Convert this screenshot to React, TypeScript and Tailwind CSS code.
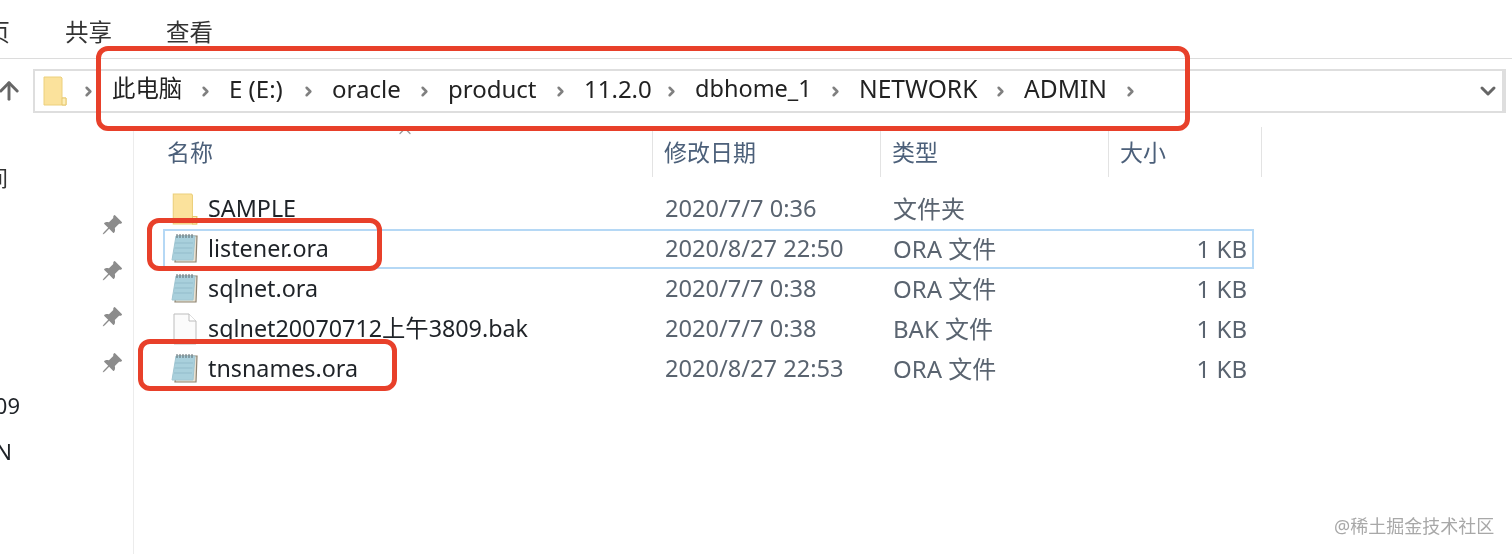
import { ArrowUp, ChevronDown, ChevronRight, ChevronUp } from "lucide-react";
import { BsPinAngleFill } from "react-icons/bs";

const crumbs = [
  { label: "此电脑", slot: "w-[117px]", text: "text-[23.4px]" },
  { label: "E (E:)", slot: "w-[103px]", text: "text-[24px]" },
  { label: "oracle", slot: "w-[116px]", text: "text-[24px]" },
  { label: "product", slot: "w-[136px]", text: "text-[24px]" },
  { label: "11.2.0", slot: "w-[111px]", text: "text-[24px]" },
  { label: "dbhome_1", slot: "w-[164px]", text: "text-[23.5px]" },
  { label: "NETWORK", slot: "w-[165px]", text: "text-[24.6px]" },
  { label: "ADMIN", slot: "w-[130px]", text: "text-[24.6px]" },
];

const files = [
  { name: "SAMPLE", date: "2020/7/7 0:36", type: "文件夹", size: "", icon: "folder" },
  { name: "listener.ora", date: "2020/8/27 22:50", type: "ORA 文件", size: "1 KB", icon: "note", selected: true },
  { name: "sqlnet.ora", date: "2020/7/7 0:38", type: "ORA 文件", size: "1 KB", icon: "note" },
  { name: "sqlnet20070712上午3809.bak", date: "2020/7/7 0:38", type: "BAK 文件", size: "1 KB", icon: "blank" },
  { name: "tnsnames.ora", date: "2020/8/27 22:53", type: "ORA 文件", size: "1 KB", icon: "note" },
];

function FolderIcon({ className }: { className: string }) {
  return (
    <svg viewBox="0 0 24 30" className={className}>
      <path d="M1 1h17l1 1v20h4v7H1z" fill="#fbe29c" stroke="#ecd07c" strokeWidth="1" />
      <path d="M19 22h4v7h-4z" fill="#fdeeb8" stroke="#e6c76e" strokeWidth="1" />
    </svg>
  );
}

function NoteIcon() {
  return (
    <svg viewBox="0 0 28 32" className="w-[28px] h-[32px] shrink-0">
      <path d="M7 3h19l-1 26H4z" fill="#e9e2d2" stroke="#8d8371" strokeWidth="1.2" />
      <path d="M5 3h19l-2 24H1z" fill="#a9d0dc" stroke="#a0c6d2" strokeWidth="1" />
      <path d="M4 10h18M3.5 15h18M3 20h18" stroke="#93bccb" strokeWidth="1" />
      <path d="M6 1v4M9 1v4M12 1v4M15 1v4M18 1v4M21 1v4" stroke="#5d6a70" strokeWidth="1" />
    </svg>
  );
}

function BlankIcon() {
  return (
    <svg viewBox="0 0 24 32" className="w-[24px] h-[32px] ml-[2px] mr-[2px] shrink-0">
      <path d="M1 1h15l7 7v23H1z" fill="#fbfbfb" stroke="#bdbdbd" strokeWidth="1" />
      <path d="M16 1v7h7" fill="#fff" stroke="#bdbdbd" strokeWidth="1" />
    </svg>
  );
}

export default function App() {
  return (
    <div
      className="relative w-[1512px] h-[554px] overflow-hidden bg-white text-[#1f2328]"
      style={{ fontFamily: '"Noto Sans", "Noto Sans CJK SC", sans-serif' }}
    >
      <div className="flex flex-col h-full blur-[0.6px]">
        {/* menu tabs */}
        <div className="h-[59px] shrink-0 border-b border-[#dcdcdc] flex items-center pt-[8px] overflow-hidden text-[23.5px] text-[#333]">
          <span className="ml-[-37px] w-[102px] shrink-0 whitespace-nowrap">主页</span>
          <span className="w-[101px] shrink-0">共享</span>
          <span>查看</span>
        </div>

        {/* address bar */}
        <div className="h-[68px] shrink-0 flex items-start pt-[10px]">
          <div className="w-[33px] h-[44px] flex items-center justify-end overflow-hidden pr-[10px]">
            <ArrowUp className="w-[28px] h-[28px] shrink-0 text-[#666]" strokeWidth={2.5} />
          </div>
          <div className="w-[1473px] h-[44px] border-2 border-[#dedede] flex items-center">
            <FolderIcon className="w-[24px] h-[30px] ml-[8px] shrink-0" />
            <ChevronRight className="w-[15px] h-[15px] ml-[14px] text-[#808080] shrink-0" strokeWidth={4} />
            <div className="flex items-center ml-[16px] leading-none flex-1 text-[#222] pb-[4px]">
              {crumbs.map((c) => (
                <div key={c.label} className={`${c.slot} flex items-center justify-between pr-[16px] shrink-0`}>
                  <span className={`${c.text} whitespace-nowrap`}>{c.label}</span>
                  <ChevronRight className="w-[15px] h-[15px] mt-[4px] text-[#808080] shrink-0" strokeWidth={4} />
                </div>
              ))}
            </div>
            <ChevronDown className="w-[24px] h-[24px] mr-[2px] text-[#666] shrink-0" strokeWidth={3} />
            <div className="w-[2px] h-full bg-[#dedede]" />
          </div>
        </div>

        <div className="flex flex-1 min-h-0">
          {/* nav sidebar */}
          <div className="w-[134px] shrink-0 border-r border-[#ececec] flex text-[22px]">
            <div className="w-[20px] overflow-hidden flex flex-col items-end pt-[35px]">
              <span className="text-[#333] leading-[30px] whitespace-nowrap mr-[12px]">房间</span>
              <span className="mt-[198px] leading-[30px] whitespace-nowrap">2009</span>
              <span className="mt-[16px] mr-[8px] leading-[30px] whitespace-nowrap">SUN</span>
            </div>
            <div className="flex flex-col gap-[24px] pl-[81px] pt-[87px]">
              {[0, 1, 2, 3].map((i) => (
                <BsPinAngleFill key={i} className="w-[22px] h-[22px] text-[#8c8c8c]" />
              ))}
            </div>
          </div>

          {/* file list */}
          <div className="flex-1 min-w-0">
            <div className="relative h-[50px] flex items-center text-[23px] text-[#4c607a]">
              <ChevronUp className="absolute left-[261px] -top-[6px] w-[20px] h-[20px] text-[#999]" strokeWidth={1.5} />
              <div className="w-[519px] h-full pl-[33px] border-r border-[#e3e3e3] flex items-center">名称</div>
              <div className="w-[228px] h-full pl-[11px] border-r border-[#e3e3e3] flex items-center">修改日期</div>
              <div className="w-[228px] h-full pl-[11px] border-r border-[#e3e3e3] flex items-center">类型</div>
              <div className="w-[153px] h-full pl-[11px] border-r border-[#e3e3e3] flex items-center">大小</div>
            </div>
            <div className="pt-[12px] pl-[29px] w-[1120px]">
              {files.map((f) => (
                <div
                  key={f.name}
                  className={
                    f.selected
                      ? "h-[40px] flex items-center border-2 border-[#b5d8f5]"
                      : "h-[40px] flex items-center border-2 border-transparent"
                  }
                >
                  <div className="w-[494px] ml-[6px] flex items-center gap-[9px] whitespace-nowrap text-[#1f2328] text-[23.3px] leading-none">
                    {f.icon === "folder" && <FolderIcon className="w-[28px] h-[32px] shrink-0" />}
                    {f.icon === "note" && <NoteIcon />}
                    {f.icon === "blank" && <BlankIcon />}
                    <span>{f.name}</span>
                  </div>
                  <div className="w-[228px] text-[#5a6470] whitespace-nowrap text-[23.6px] leading-none">{f.date}</div>
                  <div className="w-[232px] text-[#5a6470] whitespace-nowrap text-[24px] leading-none">{f.type}</div>
                  <div className="w-[122px] text-right text-[#5a6470] whitespace-nowrap text-[24px] leading-none">{f.size}</div>
                </div>
              ))}
            </div>
          </div>
        </div>
      </div>

      {/* red annotation boxes */}
      <div className="absolute left-[96px] top-[46px] w-[1094px] h-[85px] border-[5px] border-[#e8402a] rounded-[12px]" />
      <div className="absolute left-[147px] top-[218px] w-[235px] h-[53px] border-[5px] border-[#e8402a] rounded-[12px]" />
      <div className="absolute left-[138px] top-[339px] w-[259px] h-[52px] border-[5px] border-[#e8402a] rounded-[12px]" />

      {/* watermark */}
      <div className="absolute left-[1334px] top-[514px] text-[18px] leading-[24px] text-[#a8a8a8] whitespace-nowrap blur-[0.3px]">
        @稀土掘金技术社区
      </div>
    </div>
  );
}
